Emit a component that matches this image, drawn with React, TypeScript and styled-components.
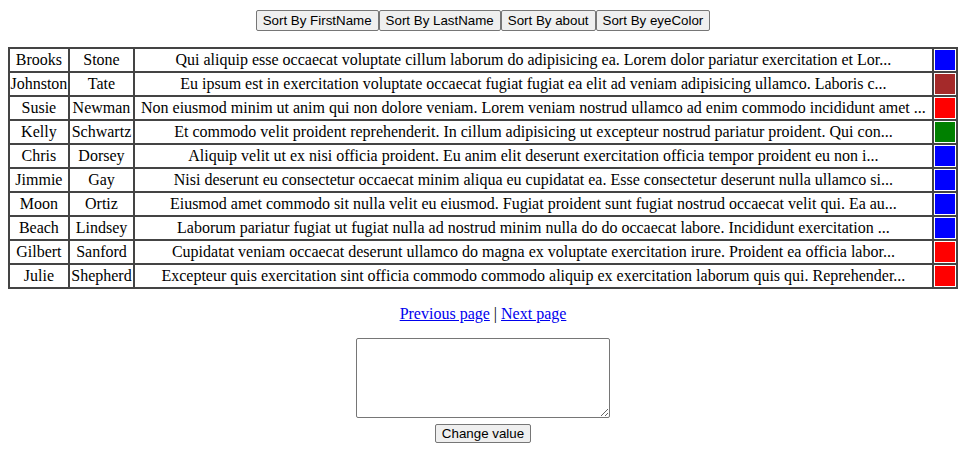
import React, { useState } from "react";
import styled, { createGlobalStyle } from "styled-components";

const GlobalStyle = createGlobalStyle`
  body {
    margin: 8px;
    background: #ffffff;
    font-family: "Liberation Serif", "Times New Roman", serif;
    font-size: 16px;
    color: #000000;
  }
`;

const Toolbar = styled.div`
  display: flex;
  justify-content: center;
  padding-top: 2px;
`;

const NativeButton = styled.button<{ $tall?: boolean }>`
  box-sizing: border-box;
  height: ${(p) => (p.$tall ? "21px" : "19px")};
  padding: 0 6px;
  margin: 0;
  font-family: "Liberation Sans", Arial, sans-serif;
  font-size: 13.33px;
  color: #000000;
  background: #efefef;
  border: 1px solid #767676;
  border-radius: 2px;
  line-height: 1;
  cursor: default;
`;

const Table = styled.table`
  width: 100%;
  margin-top: 16px;
  border-collapse: collapse;
  border: 2px solid #444444;
`;

const Cell = styled.td<{ $pad?: string }>`
  border: 2px solid #444444;
  padding: ${(p) => p.$pad ?? "1px 0"};
  text-align: center;
  white-space: nowrap;
  font-size: 16px;
  line-height: 18px;
`;

const Swatch = styled.div<{ $color: string }>`
  width: 20px;
  height: 20px;
  margin: 0 auto;
  background: ${(p) => p.$color};
`;

const Pager = styled.p`
  margin: 16px 0 15px;
  text-align: center;
  line-height: 18px;
`;

const PageLink = styled.a`
  color: #0000ee;
  text-decoration: underline;
`;

const Form = styled.div`
  display: flex;
  flex-direction: column;
  align-items: center;
  gap: 6px;
`;

const TextBox = styled.textarea`
  box-sizing: border-box;
  width: 254px;
  height: 80px;
  margin: 0;
  border: 1px solid #767676;
  border-radius: 2px;
  padding: 2px;
  resize: both;
  font-family: "Liberation Mono", monospace;
  font-size: 13.33px;
`;

type Person = { first: string; last: string; about: string; eye: string };

const people: Person[] = [
  { first: "Brooks", last: "Stone", about: "Qui aliquip esse occaecat voluptate cillum laborum do adipisicing ea. Lorem dolor pariatur exercitation et Lor...", eye: "blue" },
  { first: "Johnston", last: "Tate", about: "Eu ipsum est in exercitation voluptate occaecat fugiat fugiat ea elit ad veniam adipisicing ullamco. Laboris c...", eye: "brown" },
  { first: "Susie", last: "Newman", about: "Non eiusmod minim ut anim qui non dolore veniam. Lorem veniam nostrud ullamco ad enim commodo incididunt amet ...", eye: "red" },
  { first: "Kelly", last: "Schwartz", about: "Et commodo velit proident reprehenderit. In cillum adipisicing ut excepteur nostrud pariatur proident. Qui con...", eye: "green" },
  { first: "Chris", last: "Dorsey", about: "Aliquip velit ut ex nisi officia proident. Eu anim elit deserunt exercitation officia tempor proident eu non i...", eye: "blue" },
  { first: "Jimmie", last: "Gay", about: "Nisi deserunt eu consectetur occaecat minim aliqua eu cupidatat ea. Esse consectetur deserunt nulla ullamco si...", eye: "blue" },
  { first: "Moon", last: "Ortiz", about: "Eiusmod amet commodo sit nulla velit eu eiusmod. Fugiat proident sunt fugiat nostrud occaecat velit qui. Ea au...", eye: "blue" },
  { first: "Beach", last: "Lindsey", about: "Laborum pariatur fugiat ut fugiat nulla ad nostrud minim nulla do do occaecat labore. Incididunt exercitation ...", eye: "blue" },
  { first: "Gilbert", last: "Sanford", about: "Cupidatat veniam occaecat deserunt ullamco do magna ex voluptate exercitation irure. Proident ea officia labor...", eye: "red" },
  { first: "Julie", last: "Shepherd", about: "Excepteur quis exercitation sint officia commodo commodo aliquip ex exercitation laborum quis qui. Reprehender...", eye: "red" },
];

export default function App() {
  const [value, setValue] = useState("");
  return (
    <>
      <GlobalStyle />
      <Toolbar>
        <NativeButton $tall>Sort By FirstName</NativeButton>
        <NativeButton $tall>Sort By LastName</NativeButton>
        <NativeButton $tall>Sort By about</NativeButton>
        <NativeButton $tall>Sort By eyeColor</NativeButton>
      </Toolbar>
      <Table>
        <tbody>
          {people.map((p) => (
            <tr key={p.first}>
              <Cell>{p.first}</Cell>
              <Cell $pad="1px">{p.last}</Cell>
              <Cell>{p.about}</Cell>
              <Cell $pad="1px">
                <Swatch $color={p.eye} />
              </Cell>
            </tr>
          ))}
        </tbody>
      </Table>
      <Pager>
        <PageLink href="#">Previous page</PageLink> | <PageLink href="#">Next page</PageLink>
      </Pager>
      <Form>
        <TextBox value={value} onChange={(e) => setValue(e.target.value)} />
        <NativeButton>Change value</NativeButton>
      </Form>
    </>
  );
}
